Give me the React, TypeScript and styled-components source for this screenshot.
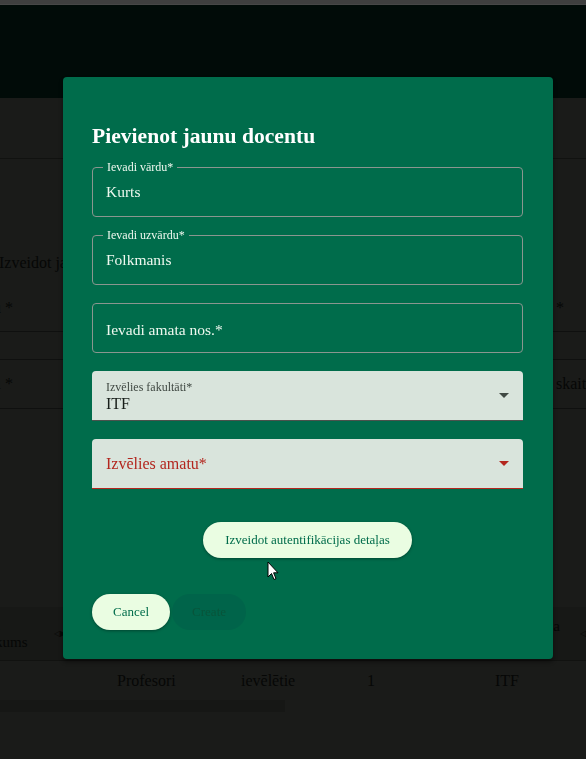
import React from "react"
import styled, { createGlobalStyle } from "styled-components"

const GlobalStyle = createGlobalStyle`
  html, body {
    margin: 0;
    padding: 0;
    background: #1a1b19;
    font-family: "Liberation Serif", "Times New Roman", serif;
  }
  * { box-sizing: border-box; }
`

/* ---------- dimmed page behind the dialog ---------- */

const Page = styled.div`
  position: relative;
  width: 586px;
  height: 759px;
  overflow: hidden;
  background: #1a1b19;
  color: #060706;
  font-size: 16px;
`

const TopStrip = styled.div`
  height: 5px;
  background: #3f3f3f;
  border-bottom: 1px solid #474747;
`

const Header = styled.header`
  height: 93px;
  background: #010b08;
`

const Toolbar = styled.div`
  height: 61px;
  border-bottom: 1px solid #111210;
`

const SectionTitle = styled.div`
  margin: 94px 0 0 -1px;
  height: 20px;
  line-height: 20px;
  white-space: nowrap;
  color: #060706;
`

const FormRow = styled.div<{ $h: number; $top?: number }>`
  display: flex;
  align-items: center;
  justify-content: space-between;
  height: ${(p) => p.$h}px;
  padding-top: ${(p) => p.$top ?? 0}px;
  border-bottom: 1px solid #0f100f;
  white-space: nowrap;
  color: #060706;
`

const LeftCut = styled.div`
  display: flex;
  justify-content: flex-end;
  width: 13px;
  overflow: hidden;
`

const RightCut = styled.div`
  width: 30px;
  overflow: hidden;
`

const TableHead = styled.div`
  display: flex;
  align-items: center;
  justify-content: space-between;
  margin-top: 198px;
  height: 54px;
  background: #171816;
  border-bottom: 1px solid #111210;
  padding-right: 0;
  color: #060706;
`

const HeadCell = styled.div<{ $gap: number }>`
  display: flex;
  align-items: center;
  gap: ${(p) => p.$gap}px;
  font-size: 15px;
  line-height: 17px;
`

const HeadLabel = styled.div<{ $shift: number }>`
  display: flex;
  flex-direction: column;
  margin-left: ${(p) => p.$shift}px;
  white-space: nowrap;
`

const SortIcon = styled.span`
  display: flex;
  gap: 1px;
  font-size: 8px;
`

const TableRow = styled.div`
  display: grid;
  grid-template-columns: 117px 124px 126px 128px 1fr;
  height: 39px;
  align-items: center;
  font-size: 16px;
  color: #060706;
`

const Scrollbar = styled.div`
  width: 285px;
  height: 12px;
  background: #161715;
`

/* ---------- dialog ---------- */

const Overlay = styled.div`
  position: fixed;
  inset: 0;
  padding: 77px 0 0 63px;
`

const Dialog = styled.div`
  width: 490px;
  height: 582px;
  background: #006c4b;
  border-radius: 4px;
  padding: 46px 30px 0 29px;
  display: flex;
  flex-direction: column;
  box-shadow: 0 3px 4px rgba(0, 0, 0, 0.45);
`

const Title = styled.h2`
  margin: 0;
  font-size: 21.6px;
  line-height: 26px;
  font-weight: 700;
  color: #ffffff;
`

const Fields = styled.div`
  margin-top: 18px;
  display: flex;
  flex-direction: column;
  gap: 18px;
`

const Outlined = styled.div`
  position: relative;
  height: 50px;
  border: 1px solid #8a968f;
  border-radius: 4px;
  padding: 0 13px;
  display: flex;
  align-items: center;
  font-size: 15.5px;
  color: #eef8ef;
`

const Floating = styled.span`
  position: absolute;
  top: -8px;
  left: 10px;
  padding: 0 4px;
  background: #006c4b;
  font-size: 12px;
  line-height: 14px;
  color: #eef8ef;
`

const Placeholder = styled.span`
  margin-top: 3px;
`

const Filled = styled.div<{ $error?: boolean }>`
  position: relative;
  height: 50px;
  background: #d9e4dc;
  border-radius: 4px 4px 0 0;
  border-bottom: 1px solid ${(p) => (p.$error ? "#b3261e" : "#4b524d")};
  padding: 0 14px;
  display: flex;
  flex-direction: column;
  justify-content: center;
`

const SelectLabel = styled.span`
  font-size: 12px;
  line-height: 14px;
  color: #404943;
  margin-top: 2px;
`

const SelectValue = styled.span`
  font-size: 16px;
  line-height: 20px;
  color: #171d19;
`

const SelectPlaceholder = styled.span`
  font-size: 16px;
  margin-top: 1px;
  color: #b3261e;
`

const Arrow = styled.span<{ $error?: boolean }>`
  position: absolute;
  right: 14px;
  top: 22px;
  width: 0;
  height: 0;
  border-left: 5px solid transparent;
  border-right: 5px solid transparent;
  border-top: 5px solid ${(p) => (p.$error ? "#b3261e" : "#404943")};
`

const AuthWrap = styled.div`
  margin-top: 33px;
  display: flex;
  justify-content: center;
`

const PillButton = styled.button<{ $disabled?: boolean; $pad: number }>`
  height: 36px;
  padding: 0 ${(p) => p.$pad}px;
  border: none;
  border-radius: 18px;
  font-family: "Liberation Serif", "Times New Roman", serif;
  font-size: 13px;
  cursor: pointer;
  background: ${(p) => (p.$disabled ? "#00644a" : "#eafde2")};
  color: ${(p) => (p.$disabled ? "#08543a" : "#006c4b")};
  box-shadow: ${(p) => (p.$disabled ? "none" : "0 1px 3px rgba(0, 0, 0, 0.35)")};
`

const Actions = styled.div`
  margin-top: 36px;
  display: flex;
  gap: 2px;
`

const Cursor = styled.svg`
  position: fixed;
  left: 267px;
  top: 561px;
`

const App: React.FC = () => {
  return (
    <>
      <GlobalStyle />
      <Page>
        <TopStrip />
        <Header />
        <Toolbar />
        <SectionTitle>Izveidot jaunu docentu</SectionTitle>
        <FormRow $h={59} $top={11}>
          <LeftCut>Ievadi vārdu *</LeftCut>
          <RightCut>*</RightCut>
        </FormRow>
        <FormRow $h={28} />
        <FormRow $h={49}>
          <LeftCut>Fakultāti *</LeftCut>
          <RightCut>skaits</RightCut>
        </FormRow>
        <TableHead>
          <HeadCell $gap={26}>
            <HeadLabel $shift={-40}>
              <span>Amata</span>
              <span>nosaukums</span>
            </HeadLabel>
            <SortIcon>◁▶</SortIcon>
          </HeadCell>
          <HeadCell $gap={20}>
            <span style={{ marginTop: -14 }}>a</span>
            <SortIcon>◁</SortIcon>
          </HeadCell>
        </TableHead>
        <TableRow>
          <span />
          <span>Profesori</span>
          <span>ievēlētie</span>
          <span>1</span>
          <span>ITF</span>
        </TableRow>
        <Scrollbar />
      </Page>

      <Overlay>
        <Dialog>
          <Title>Pievienot jaunu docentu</Title>
          <Fields>
            <Outlined>
              <Floating>Ievadi vārdu*</Floating>
              Kurts
            </Outlined>
            <Outlined>
              <Floating>Ievadi uzvārdu*</Floating>
              Folkmanis
            </Outlined>
            <Outlined>
              <Placeholder>Ievadi amata nos.*</Placeholder>
            </Outlined>
            <Filled>
              <SelectLabel>Izvēlies fakultāti*</SelectLabel>
              <SelectValue>ITF</SelectValue>
              <Arrow />
            </Filled>
            <Filled $error>
              <SelectPlaceholder>Izvēlies amatu*</SelectPlaceholder>
              <Arrow $error />
            </Filled>
          </Fields>
          <AuthWrap>
            <PillButton $pad={22}>Izveidot autentifikācijas detaļas</PillButton>
          </AuthWrap>
          <Actions>
            <PillButton $pad={21}>Cancel</PillButton>
            <PillButton $pad={20} $disabled>
              Create
            </PillButton>
          </Actions>
        </Dialog>
      </Overlay>

      <Cursor width="13" height="21" viewBox="0 0 13 21">
        <path
          d="M1 1 L1 16 L4.5 12.5 L7 18.5 L9 17.6 L6.6 11.8 L11 11.8 Z"
          fill="#ffffff"
          stroke="#000000"
          strokeWidth="1"
          strokeLinejoin="round"
        />
      </Cursor>
    </>
  )
}

export default App
